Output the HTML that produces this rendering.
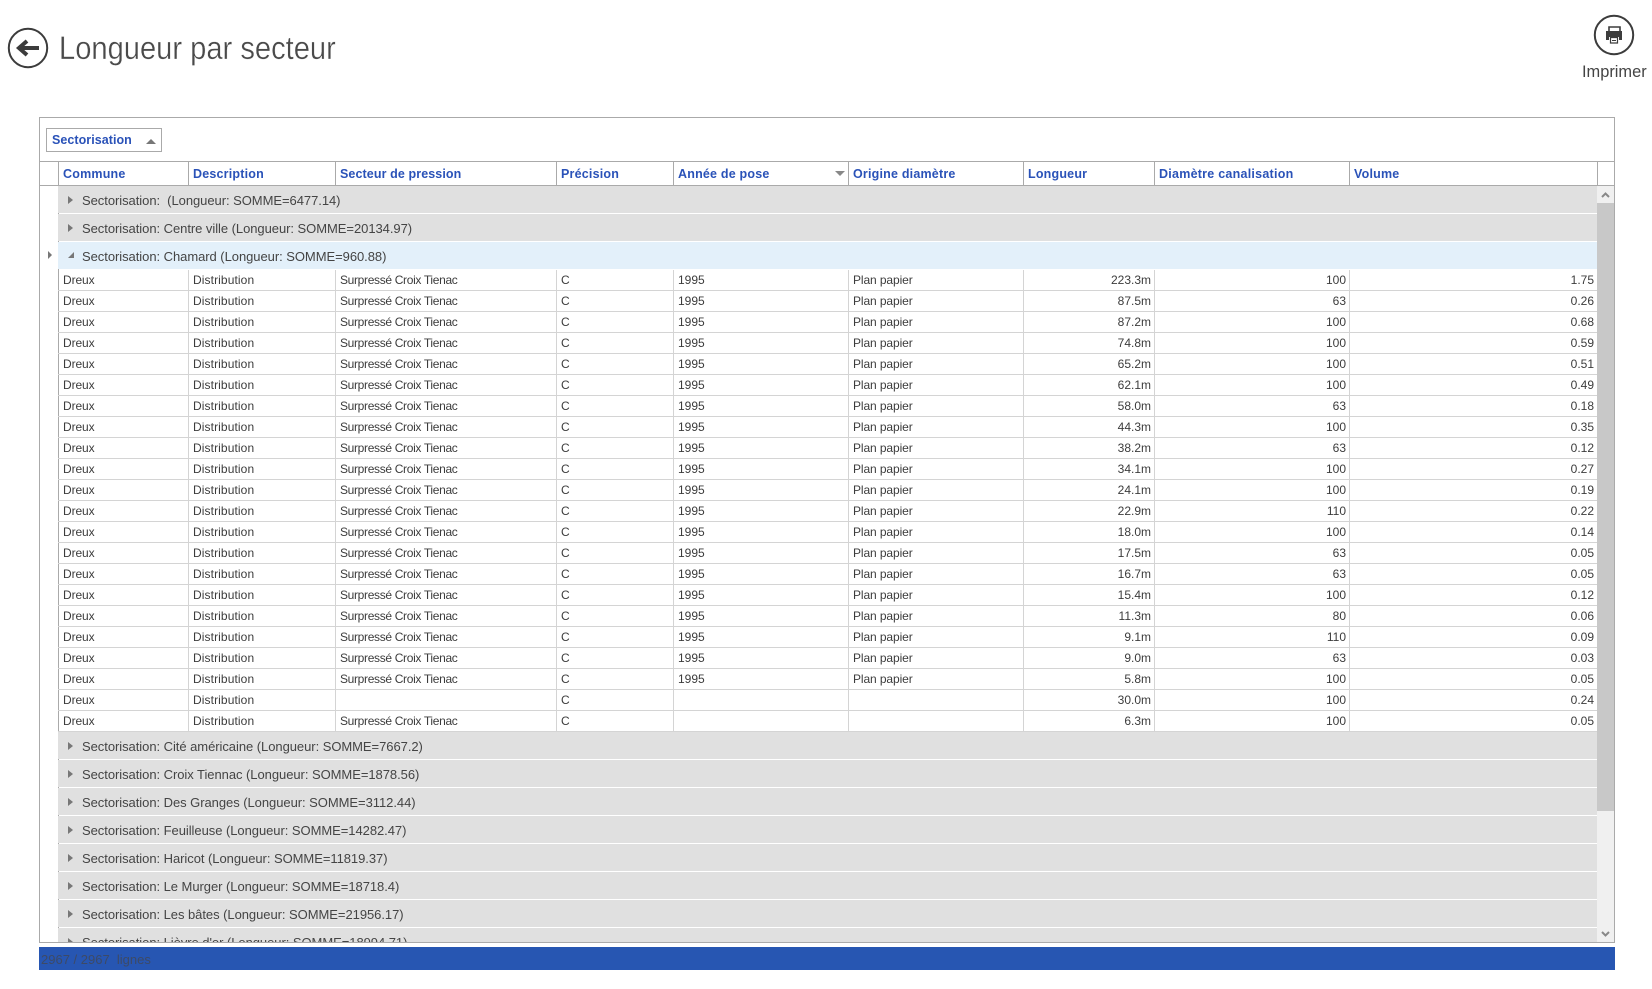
<!DOCTYPE html>
<html lang="fr"><head><meta charset="utf-8"><title>Longueur par secteur</title>
<style>
html,body{margin:0;padding:0;background:#fff;width:1652px;height:989px;overflow:hidden;font-family:"Liberation Sans",sans-serif}
.a{position:absolute}
#title{left:59px;top:28px;font-size:32px;line-height:40px;color:#4a4a4a;white-space:nowrap;transform:scaleX(.91);transform-origin:0 0;-webkit-text-stroke:.35px #fff}
#imp{left:1582px;top:62px;font-size:16.4px;line-height:20px;color:#444;white-space:nowrap}
#grid{left:39px;top:117px;width:1576px;height:826px;box-sizing:border-box;border:1px solid #aaa;overflow:hidden;background:#fff}
#tb{left:46px;top:128px;width:116px;height:24px;box-sizing:border-box;border:1px solid #aaa;background:#fff}
.h{font-weight:bold;font-size:12.5px;letter-spacing:.2px;color:#2a52b8;line-height:22px;white-space:nowrap}
#hl{left:40px;top:161px;width:1574px;height:25px;box-sizing:border-box;border-top:1px solid #aaa;border-bottom:1px solid #aaa}
.v{width:1px;background:#aaa;top:162px;height:23px}
.g{left:58px;width:1539px;height:27px;background:#e0e0e0;color:#444;font-size:13px;line-height:27px;white-space:pre;letter-spacing:-.05px}
.g span{position:absolute;left:24px;top:1px}
.t{position:absolute;left:10px;top:10px;width:0;height:0;border-left:5px solid #777;border-top:4px solid transparent;border-bottom:4px solid transparent}
#rows{left:58px;top:270px;width:1539px}
.r{position:relative;height:21px;box-sizing:border-box;border-bottom:1px solid #d4d4d4;display:flex;font-size:12px;line-height:20px;color:#3c3c3c}
.r i{font-style:normal;display:block;box-sizing:border-box;height:20px;border-right:1px solid #d4d4d4;padding-left:4px;white-space:nowrap;overflow:hidden}
.r i:nth-child(1){width:131px;padding-left:5px;letter-spacing:-.1px}
.r i:nth-child(2){width:147px;letter-spacing:.1px}
.r i:nth-child(3){width:221px;letter-spacing:-.33px}
.r i:nth-child(4){width:117px}
.r i:nth-child(5){width:175px}
.r i:nth-child(6){width:175px;letter-spacing:-.1px}
.r i:nth-child(7){width:131px;text-align:right;padding-right:3px}
.r i:nth-child(8){width:195px;text-align:right;padding-right:3px}
.r i:nth-child(9){width:247px;text-align:right;padding-right:3px;border-right:0}
#foot{left:39px;top:947px;width:1576px;height:23px;background:#2756b2;color:#3d4a66;font-size:13px;line-height:25px;white-space:pre;padding-left:2px;box-sizing:border-box}
</style></head><body>
<svg class="a" style="left:0;top:0" width="70" height="90" viewBox="0 0 70 90"><circle cx="28" cy="48" r="19.2" fill="none" stroke="#3c3c3c" stroke-width="2"/><path d="M39 48H21" stroke="#3c3c3c" stroke-width="4" fill="none"/><path d="M27 41L19 48L27 55" stroke="#3c3c3c" stroke-width="4" fill="none"/></svg>
<div class="a" id="title">Longueur par secteur</div>
<svg class="a" style="left:1590px;top:11px" width="48" height="48" viewBox="1590 11 48 48"><circle cx="1614" cy="35" r="19.2" fill="none" stroke="#3c3c3c" stroke-width="2"/><path d="M1609 27h11v5h-11z" fill="none" stroke="#3c3c3c" stroke-width="1.6"/><path d="M1606 31h16v9h-3v-3h-10v3h-3z" fill="#3c3c3c"/><path d="M1610.500 37.500h7v5.500h-7z" fill="#fff" stroke="#3c3c3c" stroke-width="1.200"/><path d="M1612 40.500h4" stroke="#3c3c3c"/></svg>
<div class="a" id="imp">Imprimer</div>
<div class="a" id="grid"></div>
<div class="a" id="tb"></div>
<div class="a h" style="left:52px;top:129px;letter-spacing:.05px">Sectorisation</div>
<svg class="a" style="left:146px;top:138px" width="10" height="6"><path d="M0 6L5 1L10 6z" fill="#777"/></svg>
<div class="a" id="hl"></div>
<div class="a v" style="left:58px"></div><div class="a v" style="left:188px"></div><div class="a v" style="left:335px"></div><div class="a v" style="left:556px"></div><div class="a v" style="left:673px"></div><div class="a v" style="left:848px"></div><div class="a v" style="left:1023px"></div><div class="a v" style="left:1154px"></div><div class="a v" style="left:1349px"></div><div class="a v" style="left:1597px"></div>
<div class="a" style="left:58px;top:186px;width:1px;height:756px;background:#aaa"></div>
<div class="a h" style="left:63px;top:163px">Commune</div>
<div class="a h" style="left:193px;top:163px">Description</div>
<div class="a h" style="left:340px;top:163px;letter-spacing:.1px">Secteur de pression</div>
<div class="a h" style="left:561px;top:163px">Précision</div>
<div class="a h" style="left:678px;top:163px">Année de pose</div>
<svg class="a" style="left:835px;top:171px" width="10" height="6"><path d="M0 0L10 0L5 5z" fill="#888"/></svg>
<div class="a h" style="left:853px;top:163px">Origine diamètre</div>
<div class="a h" style="left:1028px;top:163px">Longueur</div>
<div class="a h" style="left:1159px;top:163px;letter-spacing:.25px">Diamètre canalisation</div>
<div class="a h" style="left:1354px;top:163px">Volume</div>

<div class="a g" style="top:186px"><b class="t"></b><span>Sectorisation:  (Longueur: SOMME=6477.14)</span></div>
<div class="a g" style="top:214px"><b class="t"></b><span>Sectorisation: Centre ville (Longueur: SOMME=20134.97)</span></div>
<div class="a g" style="top:242px;background:#e3f0fa"><svg class="a" style="left:10px;top:9px" width="8" height="8"><path d="M6 1V7H0z" fill="#777"/></svg><span>Sectorisation: Chamard (Longueur: SOMME=960.88)</span></div>
<svg class="a" style="left:47px;top:250px" width="6" height="10"><path d="M1 1L5 5L1 9z" fill="#777"/></svg>

<div class="a" id="rows">
<div class="r"><i>Dreux</i><i>Distribution</i><i>Surpressé Croix Tienac</i><i>C</i><i>1995</i><i>Plan papier</i><i>223.3m</i><i>100</i><i>1.75</i></div>
<div class="r"><i>Dreux</i><i>Distribution</i><i>Surpressé Croix Tienac</i><i>C</i><i>1995</i><i>Plan papier</i><i>87.5m</i><i>63</i><i>0.26</i></div>
<div class="r"><i>Dreux</i><i>Distribution</i><i>Surpressé Croix Tienac</i><i>C</i><i>1995</i><i>Plan papier</i><i>87.2m</i><i>100</i><i>0.68</i></div>
<div class="r"><i>Dreux</i><i>Distribution</i><i>Surpressé Croix Tienac</i><i>C</i><i>1995</i><i>Plan papier</i><i>74.8m</i><i>100</i><i>0.59</i></div>
<div class="r"><i>Dreux</i><i>Distribution</i><i>Surpressé Croix Tienac</i><i>C</i><i>1995</i><i>Plan papier</i><i>65.2m</i><i>100</i><i>0.51</i></div>
<div class="r"><i>Dreux</i><i>Distribution</i><i>Surpressé Croix Tienac</i><i>C</i><i>1995</i><i>Plan papier</i><i>62.1m</i><i>100</i><i>0.49</i></div>
<div class="r"><i>Dreux</i><i>Distribution</i><i>Surpressé Croix Tienac</i><i>C</i><i>1995</i><i>Plan papier</i><i>58.0m</i><i>63</i><i>0.18</i></div>
<div class="r"><i>Dreux</i><i>Distribution</i><i>Surpressé Croix Tienac</i><i>C</i><i>1995</i><i>Plan papier</i><i>44.3m</i><i>100</i><i>0.35</i></div>
<div class="r"><i>Dreux</i><i>Distribution</i><i>Surpressé Croix Tienac</i><i>C</i><i>1995</i><i>Plan papier</i><i>38.2m</i><i>63</i><i>0.12</i></div>
<div class="r"><i>Dreux</i><i>Distribution</i><i>Surpressé Croix Tienac</i><i>C</i><i>1995</i><i>Plan papier</i><i>34.1m</i><i>100</i><i>0.27</i></div>
<div class="r"><i>Dreux</i><i>Distribution</i><i>Surpressé Croix Tienac</i><i>C</i><i>1995</i><i>Plan papier</i><i>24.1m</i><i>100</i><i>0.19</i></div>
<div class="r"><i>Dreux</i><i>Distribution</i><i>Surpressé Croix Tienac</i><i>C</i><i>1995</i><i>Plan papier</i><i>22.9m</i><i>110</i><i>0.22</i></div>
<div class="r"><i>Dreux</i><i>Distribution</i><i>Surpressé Croix Tienac</i><i>C</i><i>1995</i><i>Plan papier</i><i>18.0m</i><i>100</i><i>0.14</i></div>
<div class="r"><i>Dreux</i><i>Distribution</i><i>Surpressé Croix Tienac</i><i>C</i><i>1995</i><i>Plan papier</i><i>17.5m</i><i>63</i><i>0.05</i></div>
<div class="r"><i>Dreux</i><i>Distribution</i><i>Surpressé Croix Tienac</i><i>C</i><i>1995</i><i>Plan papier</i><i>16.7m</i><i>63</i><i>0.05</i></div>
<div class="r"><i>Dreux</i><i>Distribution</i><i>Surpressé Croix Tienac</i><i>C</i><i>1995</i><i>Plan papier</i><i>15.4m</i><i>100</i><i>0.12</i></div>
<div class="r"><i>Dreux</i><i>Distribution</i><i>Surpressé Croix Tienac</i><i>C</i><i>1995</i><i>Plan papier</i><i>11.3m</i><i>80</i><i>0.06</i></div>
<div class="r"><i>Dreux</i><i>Distribution</i><i>Surpressé Croix Tienac</i><i>C</i><i>1995</i><i>Plan papier</i><i>9.1m</i><i>110</i><i>0.09</i></div>
<div class="r"><i>Dreux</i><i>Distribution</i><i>Surpressé Croix Tienac</i><i>C</i><i>1995</i><i>Plan papier</i><i>9.0m</i><i>63</i><i>0.03</i></div>
<div class="r"><i>Dreux</i><i>Distribution</i><i>Surpressé Croix Tienac</i><i>C</i><i>1995</i><i>Plan papier</i><i>5.8m</i><i>100</i><i>0.05</i></div>
<div class="r"><i>Dreux</i><i>Distribution</i><i></i><i>C</i><i></i><i></i><i>30.0m</i><i>100</i><i>0.24</i></div>
<div class="r"><i>Dreux</i><i>Distribution</i><i>Surpressé Croix Tienac</i><i>C</i><i></i><i></i><i>6.3m</i><i>100</i><i>0.05</i></div>
</div>

<div class="a g" style="top:732px"><b class="t"></b><span>Sectorisation: Cité américaine (Longueur: SOMME=7667.2)</span></div>
<div class="a g" style="top:760px"><b class="t"></b><span>Sectorisation: Croix Tiennac (Longueur: SOMME=1878.56)</span></div>
<div class="a g" style="top:788px"><b class="t"></b><span>Sectorisation: Des Granges (Longueur: SOMME=3112.44)</span></div>
<div class="a g" style="top:816px"><b class="t"></b><span>Sectorisation: Feuilleuse (Longueur: SOMME=14282.47)</span></div>
<div class="a g" style="top:844px"><b class="t"></b><span>Sectorisation: Haricot (Longueur: SOMME=11819.37)</span></div>
<div class="a g" style="top:872px"><b class="t"></b><span>Sectorisation: Le Murger (Longueur: SOMME=18718.4)</span></div>
<div class="a g" style="top:900px"><b class="t"></b><span>Sectorisation: Les bâtes (Longueur: SOMME=21956.17)</span></div>
<div class="a g" style="top:928px;height:14px;overflow:hidden"><b class="t"></b><span>Sectorisation: Lièvre d'or (Longueur: SOMME=18994.71)</span></div>

<div class="a" style="left:1597px;top:186px;width:17px;height:756px;background:#f0f0f0"></div>
<div class="a" style="left:1597px;top:203px;width:17px;height:608px;background:#c8c8c8"></div>
<svg class="a" style="left:1597px;top:186px" width="17" height="17"><path d="M5 11L8.500 7.500L12 11" fill="none" stroke="#888" stroke-width="2"/></svg>
<svg class="a" style="left:1597px;top:925px" width="17" height="17"><path d="M5 7L8.500 10.500L12 7" fill="none" stroke="#888" stroke-width="2"/></svg>
<div class="a" id="foot">2967 / 2967  lignes</div>
</body></html>
